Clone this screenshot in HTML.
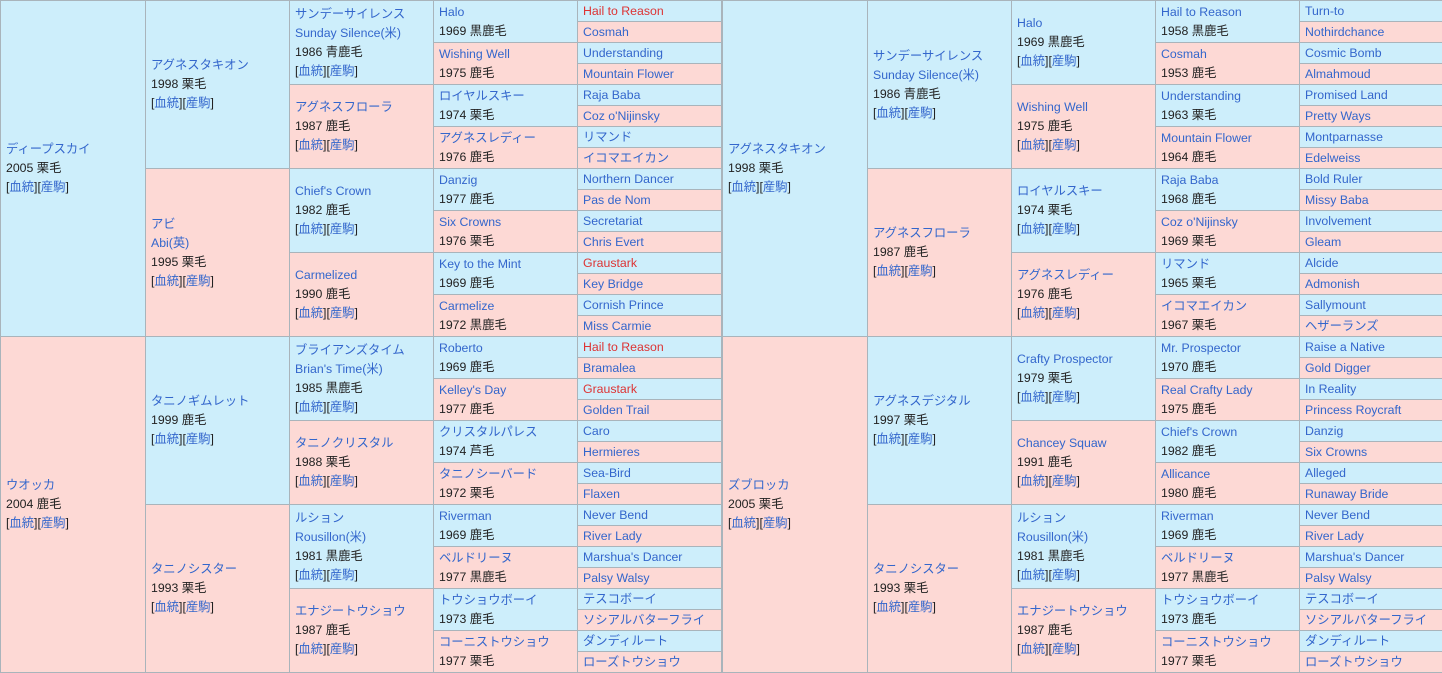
<!DOCTYPE html>
<html><head><meta charset="utf-8"><style>
html,body{margin:0;padding:0;background:#fff;}
body{width:1442px;height:673px;overflow:hidden;font-family:"Liberation Sans","Noto Sans CJK JP",sans-serif;font-size:12.3px;color:#222;}
.wrap{display:flex;}
table{border-collapse:collapse;table-layout:fixed;width:721px;height:673px;}
td{border:1px solid #a9b4bb;padding:0 5px;vertical-align:middle;line-height:19px;white-space:nowrap;overflow:hidden;}
tr{height:20px;}
.b{background:#cdeefb;}
.p{background:#fdd9d5;}
a{color:#3366cc;text-decoration:none;}
a.r{color:#dd3333;}
</style></head><body><div class="wrap">
<table>
<colgroup><col style="width:145px"><col style="width:144px"><col style="width:144px"><col style="width:144px"><col style="width:144px"></colgroup>
<tr><td rowspan="16" class="b"><a>ディープスカイ</a><br>2005 栗毛<br>[<a>血統</a>][<a>産駒</a>]</td><td rowspan="8" class="b"><a>アグネスタキオン</a><br>1998 栗毛<br>[<a>血統</a>][<a>産駒</a>]</td><td rowspan="4" class="b"><a>サンデーサイレンス</a><br><a>Sunday Silence(米)</a><br>1986 青鹿毛<br>[<a>血統</a>][<a>産駒</a>]</td><td rowspan="2" class="b"><a>Halo</a><br>1969 黒鹿毛</td><td class="b"><a class="r">Hail to Reason</a></td></tr>
<tr><td class="p"><a>Cosmah</a></td></tr>
<tr><td rowspan="2" class="p"><a>Wishing Well</a><br>1975 鹿毛</td><td class="b"><a>Understanding</a></td></tr>
<tr><td class="p"><a>Mountain Flower</a></td></tr>
<tr><td rowspan="4" class="p"><a>アグネスフローラ</a><br>1987 鹿毛<br>[<a>血統</a>][<a>産駒</a>]</td><td rowspan="2" class="b"><a>ロイヤルスキー</a><br>1974 栗毛</td><td class="b"><a>Raja Baba</a></td></tr>
<tr><td class="p"><a>Coz o'Nijinsky</a></td></tr>
<tr><td rowspan="2" class="p"><a>アグネスレディー</a><br>1976 鹿毛</td><td class="b"><a>リマンド</a></td></tr>
<tr><td class="p"><a>イコマエイカン</a></td></tr>
<tr><td rowspan="8" class="p"><a>アビ</a><br><a>Abi(英)</a><br>1995 栗毛<br>[<a>血統</a>][<a>産駒</a>]</td><td rowspan="4" class="b"><a>Chief's Crown</a><br>1982 鹿毛<br>[<a>血統</a>][<a>産駒</a>]</td><td rowspan="2" class="b"><a>Danzig</a><br>1977 鹿毛</td><td class="b"><a>Northern Dancer</a></td></tr>
<tr><td class="p"><a>Pas de Nom</a></td></tr>
<tr><td rowspan="2" class="p"><a>Six Crowns</a><br>1976 栗毛</td><td class="b"><a>Secretariat</a></td></tr>
<tr><td class="p"><a>Chris Evert</a></td></tr>
<tr><td rowspan="4" class="p"><a>Carmelized</a><br>1990 鹿毛<br>[<a>血統</a>][<a>産駒</a>]</td><td rowspan="2" class="b"><a>Key to the Mint</a><br>1969 鹿毛</td><td class="b"><a class="r">Graustark</a></td></tr>
<tr><td class="p"><a>Key Bridge</a></td></tr>
<tr><td rowspan="2" class="p"><a>Carmelize</a><br>1972 黒鹿毛</td><td class="b"><a>Cornish Prince</a></td></tr>
<tr><td class="p"><a>Miss Carmie</a></td></tr>
<tr><td rowspan="16" class="p"><a>ウオッカ</a><br>2004 鹿毛<br>[<a>血統</a>][<a>産駒</a>]</td><td rowspan="8" class="b"><a>タニノギムレット</a><br>1999 鹿毛<br>[<a>血統</a>][<a>産駒</a>]</td><td rowspan="4" class="b"><a>ブライアンズタイム</a><br><a>Brian's Time(米)</a><br>1985 黒鹿毛<br>[<a>血統</a>][<a>産駒</a>]</td><td rowspan="2" class="b"><a>Roberto</a><br>1969 鹿毛</td><td class="b"><a class="r">Hail to Reason</a></td></tr>
<tr><td class="p"><a>Bramalea</a></td></tr>
<tr><td rowspan="2" class="p"><a>Kelley's Day</a><br>1977 鹿毛</td><td class="b"><a class="r">Graustark</a></td></tr>
<tr><td class="p"><a>Golden Trail</a></td></tr>
<tr><td rowspan="4" class="p"><a>タニノクリスタル</a><br>1988 栗毛<br>[<a>血統</a>][<a>産駒</a>]</td><td rowspan="2" class="b"><a>クリスタルパレス</a><br>1974 芦毛</td><td class="b"><a>Caro</a></td></tr>
<tr><td class="p"><a>Hermieres</a></td></tr>
<tr><td rowspan="2" class="p"><a>タニノシーバード</a><br>1972 栗毛</td><td class="b"><a>Sea-Bird</a></td></tr>
<tr><td class="p"><a>Flaxen</a></td></tr>
<tr><td rowspan="8" class="p"><a>タニノシスター</a><br>1993 栗毛<br>[<a>血統</a>][<a>産駒</a>]</td><td rowspan="4" class="b"><a>ルション</a><br><a>Rousillon(米)</a><br>1981 黒鹿毛<br>[<a>血統</a>][<a>産駒</a>]</td><td rowspan="2" class="b"><a>Riverman</a><br>1969 鹿毛</td><td class="b"><a>Never Bend</a></td></tr>
<tr><td class="p"><a>River Lady</a></td></tr>
<tr><td rowspan="2" class="p"><a>ベルドリーヌ</a><br>1977 黒鹿毛</td><td class="b"><a>Marshua's Dancer</a></td></tr>
<tr><td class="p"><a>Palsy Walsy</a></td></tr>
<tr><td rowspan="4" class="p"><a>エナジートウショウ</a><br>1987 鹿毛<br>[<a>血統</a>][<a>産駒</a>]</td><td rowspan="2" class="b"><a>トウショウボーイ</a><br>1973 鹿毛</td><td class="b"><a>テスコボーイ</a></td></tr>
<tr><td class="p"><a>ソシアルバターフライ</a></td></tr>
<tr><td rowspan="2" class="p"><a>コーニストウショウ</a><br>1977 栗毛</td><td class="b"><a>ダンディルート</a></td></tr>
<tr><td class="p"><a>ローズトウショウ</a></td></tr>
</table>
<table>
<colgroup><col style="width:145px"><col style="width:144px"><col style="width:144px"><col style="width:144px"><col style="width:144px"></colgroup>
<tr><td rowspan="16" class="b"><a>アグネスタキオン</a><br>1998 栗毛<br>[<a>血統</a>][<a>産駒</a>]</td><td rowspan="8" class="b"><a>サンデーサイレンス</a><br><a>Sunday Silence(米)</a><br>1986 青鹿毛<br>[<a>血統</a>][<a>産駒</a>]</td><td rowspan="4" class="b"><a>Halo</a><br>1969 黒鹿毛<br>[<a>血統</a>][<a>産駒</a>]</td><td rowspan="2" class="b"><a>Hail to Reason</a><br>1958 黒鹿毛</td><td class="b"><a>Turn-to</a></td></tr>
<tr><td class="p"><a>Nothirdchance</a></td></tr>
<tr><td rowspan="2" class="p"><a>Cosmah</a><br>1953 鹿毛</td><td class="b"><a>Cosmic Bomb</a></td></tr>
<tr><td class="p"><a>Almahmoud</a></td></tr>
<tr><td rowspan="4" class="p"><a>Wishing Well</a><br>1975 鹿毛<br>[<a>血統</a>][<a>産駒</a>]</td><td rowspan="2" class="b"><a>Understanding</a><br>1963 栗毛</td><td class="b"><a>Promised Land</a></td></tr>
<tr><td class="p"><a>Pretty Ways</a></td></tr>
<tr><td rowspan="2" class="p"><a>Mountain Flower</a><br>1964 鹿毛</td><td class="b"><a>Montparnasse</a></td></tr>
<tr><td class="p"><a>Edelweiss</a></td></tr>
<tr><td rowspan="8" class="p"><a>アグネスフローラ</a><br>1987 鹿毛<br>[<a>血統</a>][<a>産駒</a>]</td><td rowspan="4" class="b"><a>ロイヤルスキー</a><br>1974 栗毛<br>[<a>血統</a>][<a>産駒</a>]</td><td rowspan="2" class="b"><a>Raja Baba</a><br>1968 鹿毛</td><td class="b"><a>Bold Ruler</a></td></tr>
<tr><td class="p"><a>Missy Baba</a></td></tr>
<tr><td rowspan="2" class="p"><a>Coz o'Nijinsky</a><br>1969 栗毛</td><td class="b"><a>Involvement</a></td></tr>
<tr><td class="p"><a>Gleam</a></td></tr>
<tr><td rowspan="4" class="p"><a>アグネスレディー</a><br>1976 鹿毛<br>[<a>血統</a>][<a>産駒</a>]</td><td rowspan="2" class="b"><a>リマンド</a><br>1965 栗毛</td><td class="b"><a>Alcide</a></td></tr>
<tr><td class="p"><a>Admonish</a></td></tr>
<tr><td rowspan="2" class="p"><a>イコマエイカン</a><br>1967 栗毛</td><td class="b"><a>Sallymount</a></td></tr>
<tr><td class="p"><a>ヘザーランズ</a></td></tr>
<tr><td rowspan="16" class="p"><a>ズブロッカ</a><br>2005 栗毛<br>[<a>血統</a>][<a>産駒</a>]</td><td rowspan="8" class="b"><a>アグネスデジタル</a><br>1997 栗毛<br>[<a>血統</a>][<a>産駒</a>]</td><td rowspan="4" class="b"><a>Crafty Prospector</a><br>1979 栗毛<br>[<a>血統</a>][<a>産駒</a>]</td><td rowspan="2" class="b"><a>Mr. Prospector</a><br>1970 鹿毛</td><td class="b"><a>Raise a Native</a></td></tr>
<tr><td class="p"><a>Gold Digger</a></td></tr>
<tr><td rowspan="2" class="p"><a>Real Crafty Lady</a><br>1975 鹿毛</td><td class="b"><a>In Reality</a></td></tr>
<tr><td class="p"><a>Princess Roycraft</a></td></tr>
<tr><td rowspan="4" class="p"><a>Chancey Squaw</a><br>1991 鹿毛<br>[<a>血統</a>][<a>産駒</a>]</td><td rowspan="2" class="b"><a>Chief's Crown</a><br>1982 鹿毛</td><td class="b"><a>Danzig</a></td></tr>
<tr><td class="p"><a>Six Crowns</a></td></tr>
<tr><td rowspan="2" class="p"><a>Allicance</a><br>1980 鹿毛</td><td class="b"><a>Alleged</a></td></tr>
<tr><td class="p"><a>Runaway Bride</a></td></tr>
<tr><td rowspan="8" class="p"><a>タニノシスター</a><br>1993 栗毛<br>[<a>血統</a>][<a>産駒</a>]</td><td rowspan="4" class="b"><a>ルション</a><br><a>Rousillon(米)</a><br>1981 黒鹿毛<br>[<a>血統</a>][<a>産駒</a>]</td><td rowspan="2" class="b"><a>Riverman</a><br>1969 鹿毛</td><td class="b"><a>Never Bend</a></td></tr>
<tr><td class="p"><a>River Lady</a></td></tr>
<tr><td rowspan="2" class="p"><a>ベルドリーヌ</a><br>1977 黒鹿毛</td><td class="b"><a>Marshua's Dancer</a></td></tr>
<tr><td class="p"><a>Palsy Walsy</a></td></tr>
<tr><td rowspan="4" class="p"><a>エナジートウショウ</a><br>1987 鹿毛<br>[<a>血統</a>][<a>産駒</a>]</td><td rowspan="2" class="b"><a>トウショウボーイ</a><br>1973 鹿毛</td><td class="b"><a>テスコボーイ</a></td></tr>
<tr><td class="p"><a>ソシアルバターフライ</a></td></tr>
<tr><td rowspan="2" class="p"><a>コーニストウショウ</a><br>1977 栗毛</td><td class="b"><a>ダンディルート</a></td></tr>
<tr><td class="p"><a>ローズトウショウ</a></td></tr>
</table>
</div></body></html>
